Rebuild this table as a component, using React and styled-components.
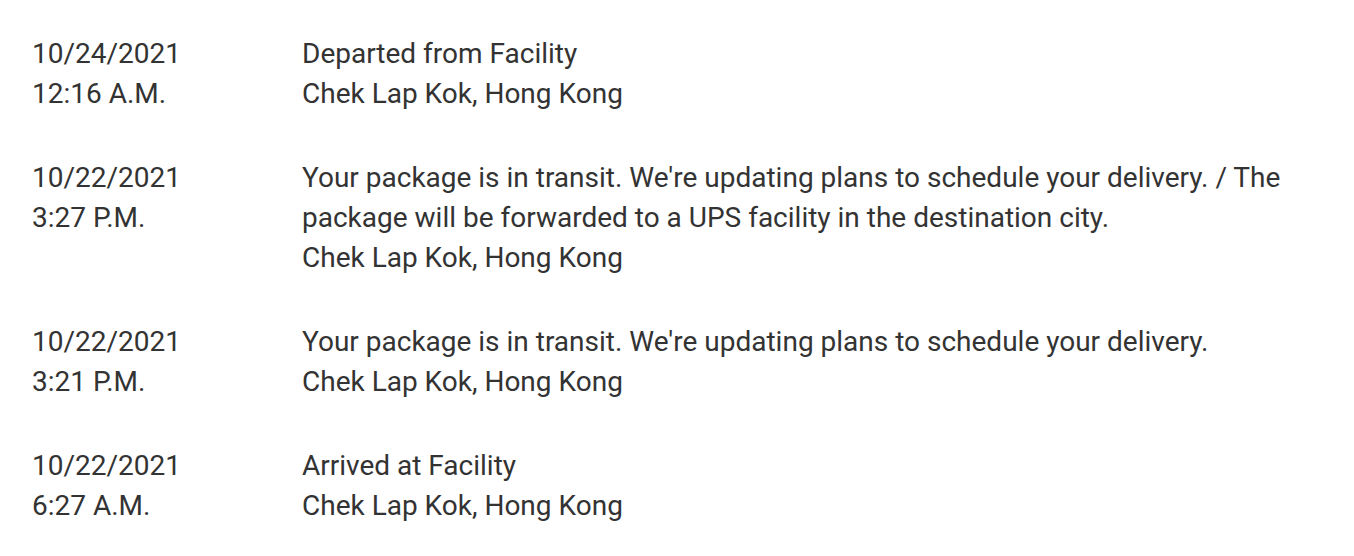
import React from "react";
import styled, { createGlobalStyle } from "styled-components";

const Global = createGlobalStyle`
  html, body { margin: 0; padding: 0; background: #fff; }
  body { font-family: Roboto, "Liberation Sans", Arial, sans-serif; }
`;

const List = styled.div`
  display: flex;
  flex-direction: column;
  gap: 44px;
  padding: 34px 0 0 32px;
  color: #333;
  font-size: 28px;
  line-height: 40px;
`;

const Row = styled.div`
  display: grid;
  grid-template-columns: 270px 1000px;
`;

const When = styled.div`
  display: flex;
  flex-direction: column;
`;

const What = styled.div`
  display: flex;
  flex-direction: column;
`;

const events = [
  { date: "10/24/2021", time: "12:16 A.M.", desc: "Departed from Facility", loc: "Chek Lap Kok, Hong Kong" },
  { date: "10/22/2021", time: "3:27 P.M.", desc: "Your package is in transit. We're updating plans to schedule your delivery. / The package will be forwarded to a UPS facility in the destination city.", loc: "Chek Lap Kok, Hong Kong" },
  { date: "10/22/2021", time: "3:21 P.M.", desc: "Your package is in transit. We're updating plans to schedule your delivery.", loc: "Chek Lap Kok, Hong Kong" },
  { date: "10/22/2021", time: "6:27 A.M.", desc: "Arrived at Facility", loc: "Chek Lap Kok, Hong Kong" },
];

export default function App() {
  return (
    <>
      <Global />
      <List>
        {events.map((e, i) => (
          <Row key={i}>
            <When>
              <span>{e.date}</span>
              <span>{e.time}</span>
            </When>
            <What>
              <span>{e.desc}</span>
              <span>{e.loc}</span>
            </What>
          </Row>
        ))}
      </List>
    </>
  );
}
